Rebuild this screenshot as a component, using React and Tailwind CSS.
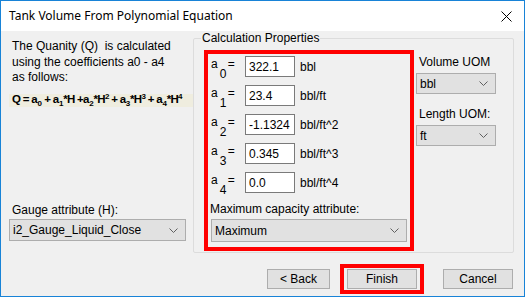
import React from "react";

const Chevron = () => (
  <svg width="9" height="5" viewBox="0 0 9 5" className="shrink-0">
    <path d="M0.5 0.5 L4.5 4.5 L8.5 0.5" fill="none" stroke="#606060" strokeWidth="1" />
  </svg>
);

const Combo = ({ value, className }) => (
  <div className={`flex items-center justify-between bg-[#e1e1e1] border border-[#adadad] pl-[3px] pr-[7px] ${className}`}>
    <span>{value}</span>
    <Chevron />
  </div>
);

const CoefRow = ({ n, value, unit }) => (
  <div className="flex items-start h-[21px]">
    <div className="w-[37px] h-[21px] flex items-start pl-[3px] pt-[1px] leading-[14px]">
      <span>a</span>
      <span className="w-[9px] pl-[2px] pt-[10px]">{n}</span>
      <span className="pl-[1px]">=</span>
    </div>
    <div className="w-[50px] h-[21px] bg-white border border-[#7a7a7a] pl-[3px] flex items-center">{value}</div>
    <div className="pl-[5px] pt-[4px] leading-[14px]">{unit}</div>
  </div>
);

const Button = ({ label, className }) => (
  <div className={`h-[20px] flex items-center justify-center bg-[#e1e1e1] border border-[#adadad] ${className}`}>{label}</div>
);

const Sub = ({ children }) => <span className="text-[8px] relative top-[3px] px-[0.5px]">{children}</span>;
const Sup = ({ children }) => <span className="text-[8px] relative top-[-4px]">{children}</span>;

export default function App() {
  return (
    <div className="w-[525px] h-[297px] border border-[#1883d7] flex flex-col font-['Liberation_Sans',Arial,sans-serif] text-[12px] text-black overflow-hidden">
      {/* title bar */}
      <div className="h-[30px] bg-white flex items-center justify-between pl-[8px] pr-[12px] shrink-0">
        <span className="font-['Noto_Sans',sans-serif] text-[12px] text-[#000]">Tank Volume From Polynomial Equation</span>
        <svg width="11" height="11" viewBox="0 0 11 11">
          <path d="M0.5 0.5 L10.5 10.5 M10.5 0.5 L0.5 10.5" stroke="#000" strokeWidth="1" />
        </svg>
      </div>

      <div className="flex-1 bg-[#f0f0f0] flex flex-col">
        <div className="flex h-[223px]">
          {/* left column */}
          <div className="w-[192px] pl-[8px] pt-[8px] flex flex-col overflow-hidden">
            <div className="pl-[3px] leading-[15.5px]">
              <div>The Quanity (Q)&nbsp; is calculated</div>
              <div>using the coefficients a0 - a4</div>
              <div>as follows:</div>
            </div>
            <div className="mt-[8px] h-[13px] bg-[#efeddf] pl-[3px] flex items-center font-bold text-[11.5px] tracking-[-0.7px] whitespace-nowrap leading-[12px]">
              <span>Q = a<Sub>0</Sub> + a<Sub>1</Sub>*H +a<Sub>2</Sub>*H<Sup>2</Sup> + a<Sub>3</Sub>*H<Sup>3</Sup> + a<Sub>4</Sub>*H<Sup>4</Sup></span>
            </div>
            <div className="mt-auto pl-[3px] leading-[14px]">Gauge attribute (H):</div>
            <Combo value="i2_Gauge_Liquid_Close" className="mt-[2px] w-[177px] h-[22px] mb-[13px]" />
          </div>

          {/* group box */}
          <fieldset className="w-[321px] mt-0 mb-[1px] border border-[#dcdcdc] rounded-[2px]">
            <legend className="ml-[7px] px-[1px] leading-[14px]">Calculation Properties</legend>
            <div className="flex pl-[10px]">
              <div className="w-[210px] h-[201px] mt-[5px] border-[4px] border-[#ff0000] flex flex-col">
                <div className="pt-[2px] flex flex-col gap-[8px]">
                  <CoefRow n="0" value="322.1" unit="bbl" />
                  <CoefRow n="1" value="23.4" unit="bbl/ft" />
                  <CoefRow n="2" value="-1.1324" unit="bbl/ft^2" />
                  <CoefRow n="3" value="0.345" unit="bbl/ft^3" />
                  <CoefRow n="4" value="0.0" unit="bbl/ft^4" />
                </div>
                <div className="mt-[9px] pl-[2px] leading-[14px]">Maximum capacity attribute:</div>
                <Combo value="Maximum" className="mt-[3px] mx-[3px] h-[23px]" />
              </div>
              <div className="flex flex-col ml-[2px] pt-[10px] w-[80px]">
                <div className="pl-[3px] leading-[14px]">Volume UOM</div>
                <Combo value="bbl" className="mt-[4px] h-[21px]" />
                <div className="mt-[13px] pl-[3px] leading-[14px]">Length UOM:</div>
                <Combo value="ft" className="mt-[4px] h-[21px]" />
              </div>
            </div>
          </fieldset>
        </div>

        {/* buttons */}
        <div className="flex items-center pl-[266px] pt-[10px]">
          <Button label="< Back" className="w-[63px]" />
          <div className="ml-[10px] border-[4px] border-[#ff0000] px-[3px] py-[1px]">
            <Button label="Finish" className="w-[70px]" />
          </div>
          <Button label="Cancel" className="w-[70px] ml-[19px]" />
        </div>
      </div>
    </div>
  );
}
